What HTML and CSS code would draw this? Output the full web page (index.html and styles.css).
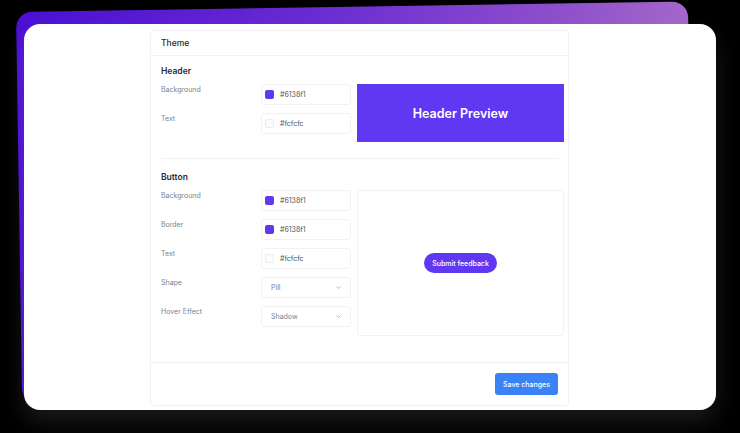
FILE: index.html
```html
<!DOCTYPE html>
<html>
<head>
<meta charset="utf-8">
<link rel="stylesheet" href="styles.css">
</head>
<body>
<div class="stage">
  <div class="backcard"></div>
  <div class="card">
    <div class="panel">
      <div class="panel-title">Theme</div>
      <div class="panel-body">
        <div class="heading heading-first">Header</div>
        <div class="section">
          <div class="fields">
            <div class="row">
              <div class="label">Background</div>
              <div class="input"><span class="swatch purple"></span><span>#6138f1</span></div>
            </div>
            <div class="row">
              <div class="label">Text</div>
              <div class="input"><span class="swatch light"></span><span>#fcfcfc</span></div>
            </div>
          </div>
          <div class="header-preview">Header Preview</div>
        </div>
        <div class="divider"></div>
        <div class="heading">Button</div>
        <div class="section">
          <div class="fields">
            <div class="row">
              <div class="label">Background</div>
              <div class="input"><span class="swatch purple"></span><span>#6138f1</span></div>
            </div>
            <div class="row">
              <div class="label">Border</div>
              <div class="input"><span class="swatch purple"></span><span>#6138f1</span></div>
            </div>
            <div class="row">
              <div class="label">Text</div>
              <div class="input"><span class="swatch light"></span><span>#fcfcfc</span></div>
            </div>
            <div class="row">
              <div class="label">Shape</div>
              <div class="input select"><span>Pill</span><svg class="chev" width="5" height="3" viewBox="0 0 5 3"><path d="M0.5 0.5 L2.5 2.5 L4.5 0.5" fill="none" stroke="#9ca3af" stroke-width="0.8"/></svg></div>
            </div>
            <div class="row">
              <div class="label">Hover Effect</div>
              <div class="input select"><span>Shadow</span><svg class="chev" width="5" height="3" viewBox="0 0 5 3"><path d="M0.5 0.5 L2.5 2.5 L4.5 0.5" fill="none" stroke="#9ca3af" stroke-width="0.8"/></svg></div>
            </div>
          </div>
          <div class="button-preview">
            <button class="submit">Submit feedback</button>
          </div>
        </div>
      </div>
      <div class="panel-footer">
        <button class="save">Save changes</button>
      </div>
    </div>
  </div>
</div>
</body>
</html>
```

FILE: styles.css
```css
* { box-sizing: border-box; }
html, body {
  margin: 0;
  padding: 0;
  background: #000;
  font-family: Inter, "Liberation Sans", sans-serif;
}
.stage {
  position: relative;
  width: 740px;
  height: 433px;
  overflow: hidden;
  padding: 24px 24px 0 24px;
}
.backcard {
  position: absolute;
  left: 16px;
  top: 12px;
  width: 672px;
  height: 392px;
  border-radius: 16px;
  background: linear-gradient(90deg, #4a0fd3 0%, #6a2bd2 45%, #8c4fcb 80%, #a466c9 100%);
  transform: rotate(-0.9deg);
  transform-origin: 0 0;
}
.card {
  position: relative;
  width: 692px;
  height: 386px;
  background: #fff;
  border-radius: 16px;
  box-shadow: 0 12px 22px rgba(255, 255, 255, 0.1);
  padding: 6px 0 0 126px;
}
.panel {
  width: 419px;
  border: 1px solid #f2f2f4;
  border-radius: 4px;
  background: #fff;
}
.panel-title {
  height: 25px;
  line-height: 24px;
  padding-left: 10px;
  font-size: 8.5px;
  font-weight: 500;
  color: #1f2937;
  border-bottom: 1px solid #f2f2f4;
}
.panel-body {
  padding: 9px 4px 26px 10px;
}
.heading {
  font-size: 8.5px;
  font-weight: 600;
  color: #1f2937;
  line-height: 12px;
  margin: 12px 0 7px 0;
}
.heading-first { margin-top: 0; }
.section {
  display: flex;
  gap: 6px;
}
.fields {
  display: flex;
  flex-direction: column;
}
.row {
  display: flex;
  height: 29px;
}
.label {
  width: 100px;
  font-size: 7px;
  line-height: 12px;
  color: #7b8290;
}
.input {
  width: 90px;
  height: 21px;
  border: 1px solid #f2f2f4;
  border-radius: 3px;
  display: flex;
  align-items: center;
  gap: 6px;
  padding-left: 3px;
  font-size: 7px;
  color: #4b5563;
}
.swatch {
  width: 9px;
  height: 9px;
  border-radius: 2px;
}
.swatch.purple { background: #6138f1; }
.swatch.light { background: #fcfcfc; border: 1px solid #ececef; }
.select {
  padding: 0 9px;
  justify-content: space-between;
  color: #7b8290;
}
.chev { display: block; }
.header-preview {
  flex: 1;
  height: 58px;
  background: #6138f1;
  color: #fff;
  font-size: 12.5px;
  font-weight: 600;
  display: flex;
  align-items: center;
  justify-content: center;
}
.divider {
  height: 1px;
  background: #f2f2f4;
  margin: 16px 5px 0 0;
}
.button-preview {
  flex: 1;
  height: 146px;
  border: 1px solid #f2f2f4;
  border-radius: 3px;
  display: flex;
  align-items: center;
  justify-content: center;
}
.submit {
  width: 73px;
  height: 20px;
  border: none;
  border-radius: 10px;
  background: #6138f1;
  color: #fff;
  font-family: inherit;
  font-size: 7px;
  font-weight: 500;
  padding: 0;
}
.panel-footer {
  border-top: 1px solid #f2f2f4;
  padding: 10px;
  display: flex;
  justify-content: flex-end;
}
.save {
  width: 63px;
  height: 22px;
  border: none;
  border-radius: 3px;
  background: #3b82f6;
  color: #fff;
  font-family: inherit;
  font-size: 7px;
  font-weight: 500;
  padding: 0;
}
```
